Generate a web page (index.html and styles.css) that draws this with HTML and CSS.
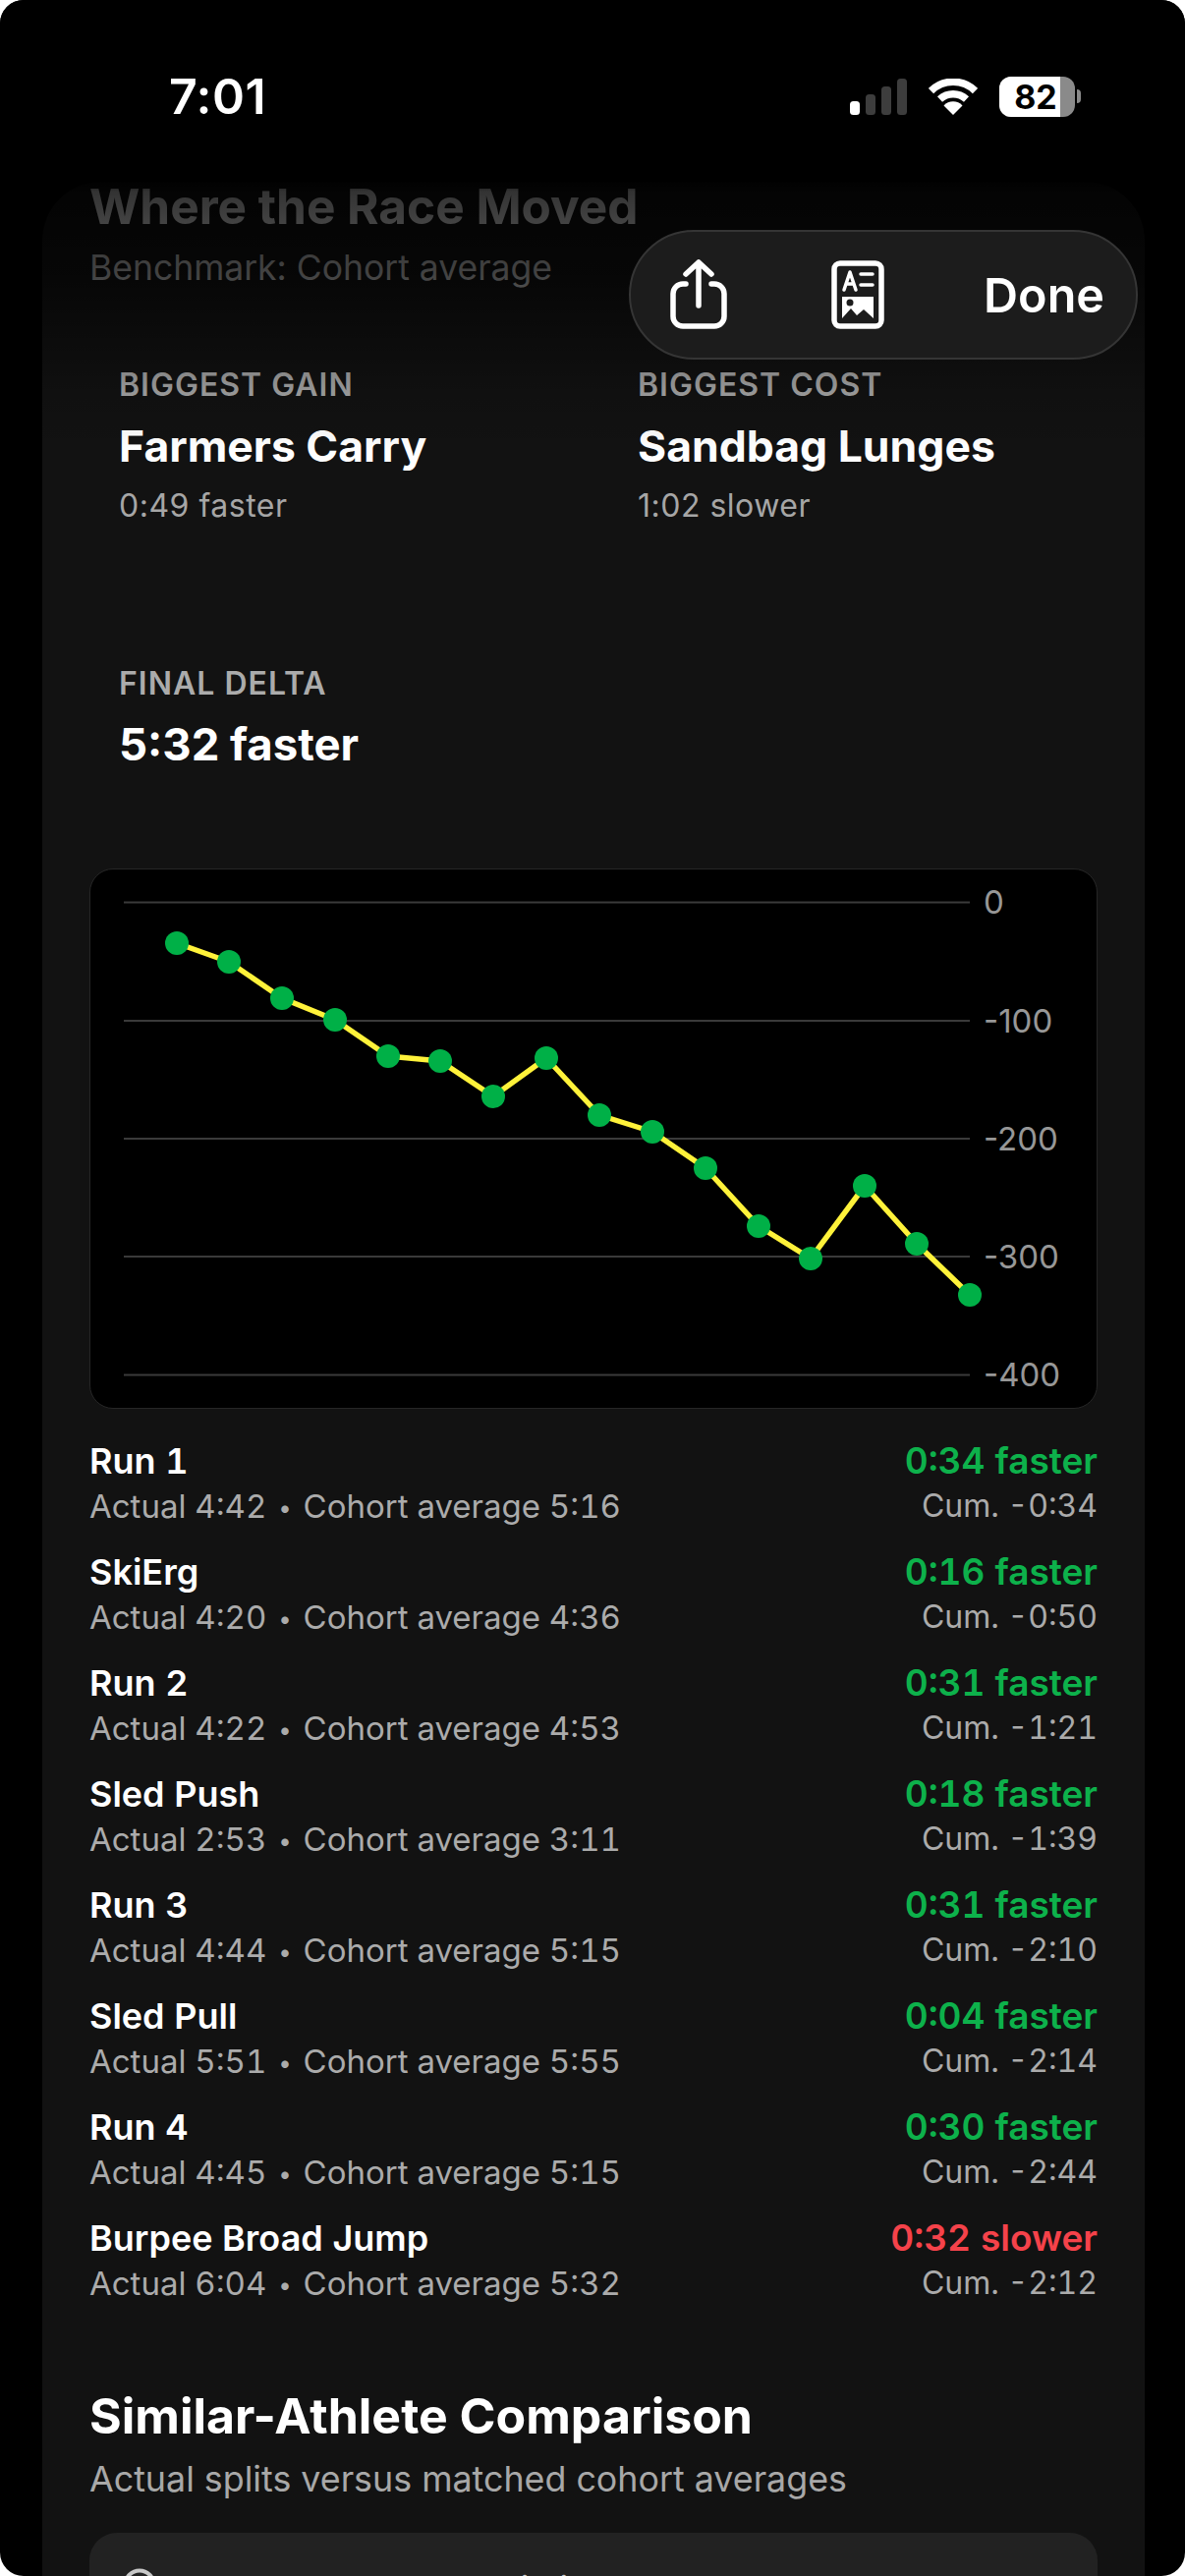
FILE: index.html
```html
<!DOCTYPE html>
<html lang="en">
<head>
    <meta charset="UTF-8">
    <meta name="viewport" content="width=device-width, initial-scale=1.0">
    <title>Where the Race Moved</title>
    <link rel="stylesheet" href="styles.css">
</head>
<body>
    <div class="screen">
        <div class="card">
            <h2 class="section-title">Where the Race Moved</h2>
            <p class="section-sub">Benchmark: Cohort average</p>

            <div class="stats">
                <div class="stat">
                    <div class="stat-label">BIGGEST GAIN</div>
                    <div class="stat-value">Farmers Carry</div>
                    <div class="stat-note">0:49 faster</div>
                </div>
                <div class="stat">
                    <div class="stat-label">BIGGEST COST</div>
                    <div class="stat-value">Sandbag Lunges</div>
                    <div class="stat-note">1:02 slower</div>
                </div>
                <div class="stat">
                    <div class="stat-label">FINAL DELTA</div>
                    <div class="stat-value stat-value-big">5:32 faster</div>
                </div>
            </div>

            <div class="chart">
                <svg width="1023" height="550" viewBox="91 884 1023 550">
                    <g class="grid">
                        <line x1="126" x2="987" y1="918.5" y2="918.5"/>
                        <line x1="126" x2="987" y1="1039" y2="1039"/>
                        <line x1="126" x2="987" y1="1159" y2="1159"/>
                        <line x1="126" x2="987" y1="1279" y2="1279"/>
                        <line x1="126" x2="987" y1="1399.5" y2="1399.5"/>
                    </g>
                    <g class="axis">
                        <text x="1001" y="930">0</text>
                        <text x="1001" y="1051">-100</text>
                        <text x="1001" y="1171">-200</text>
                        <text x="1001" y="1291">-300</text>
                        <text x="1001" y="1411">-400</text>
                    </g>
                    <polyline class="trend" points="180,960 233,979 287,1016 341,1038 395,1075 448,1080 502,1116 556,1077 610,1135 664,1152 718,1189 772,1248 825,1281 880,1207 933,1266 987,1318"/>
                    <g class="dots">
                        <circle cx="180" cy="960" r="12"/>
                        <circle cx="233" cy="979" r="12"/>
                        <circle cx="287" cy="1016" r="12"/>
                        <circle cx="341" cy="1038" r="12"/>
                        <circle cx="395" cy="1075" r="12"/>
                        <circle cx="448" cy="1080" r="12"/>
                        <circle cx="502" cy="1116" r="12"/>
                        <circle cx="556" cy="1077" r="12"/>
                        <circle cx="610" cy="1135" r="12"/>
                        <circle cx="664" cy="1152" r="12"/>
                        <circle cx="718" cy="1189" r="12"/>
                        <circle cx="772" cy="1248" r="12"/>
                        <circle cx="825" cy="1281" r="12"/>
                        <circle cx="880" cy="1207" r="12"/>
                        <circle cx="933" cy="1266" r="12"/>
                        <circle cx="987" cy="1318" r="12"/>
                    </g>
                </svg>
            </div>

            <div class="splits">
                <div class="split">
                    <div><div class="split-name">Run 1</div><div class="split-meta">Actual 4:42 <span class="dot">•</span> Cohort average 5:16</div></div>
                    <div class="split-right"><div class="delta faster">0:34 faster</div><div class="split-meta">Cum. -0:34</div></div>
                </div>
                <div class="split">
                    <div><div class="split-name">SkiErg</div><div class="split-meta">Actual 4:20 <span class="dot">•</span> Cohort average 4:36</div></div>
                    <div class="split-right"><div class="delta faster">0:16 faster</div><div class="split-meta">Cum. -0:50</div></div>
                </div>
                <div class="split">
                    <div><div class="split-name">Run 2</div><div class="split-meta">Actual 4:22 <span class="dot">•</span> Cohort average 4:53</div></div>
                    <div class="split-right"><div class="delta faster">0:31 faster</div><div class="split-meta">Cum. -1:21</div></div>
                </div>
                <div class="split">
                    <div><div class="split-name">Sled Push</div><div class="split-meta">Actual 2:53 <span class="dot">•</span> Cohort average 3:11</div></div>
                    <div class="split-right"><div class="delta faster">0:18 faster</div><div class="split-meta">Cum. -1:39</div></div>
                </div>
                <div class="split">
                    <div><div class="split-name">Run 3</div><div class="split-meta">Actual 4:44 <span class="dot">•</span> Cohort average 5:15</div></div>
                    <div class="split-right"><div class="delta faster">0:31 faster</div><div class="split-meta">Cum. -2:10</div></div>
                </div>
                <div class="split">
                    <div><div class="split-name">Sled Pull</div><div class="split-meta">Actual 5:51 <span class="dot">•</span> Cohort average 5:55</div></div>
                    <div class="split-right"><div class="delta faster">0:04 faster</div><div class="split-meta">Cum. -2:14</div></div>
                </div>
                <div class="split">
                    <div><div class="split-name">Run 4</div><div class="split-meta">Actual 4:45 <span class="dot">•</span> Cohort average 5:15</div></div>
                    <div class="split-right"><div class="delta faster">0:30 faster</div><div class="split-meta">Cum. -2:44</div></div>
                </div>
                <div class="split">
                    <div><div class="split-name">Burpee Broad Jump</div><div class="split-meta">Actual 6:04 <span class="dot">•</span> Cohort average 5:32</div></div>
                    <div class="split-right"><div class="delta slower">0:32 slower</div><div class="split-meta">Cum. -2:12</div></div>
                </div>
            </div>

            <h2 class="compare-title">Similar-Athlete Comparison</h2>
            <p class="compare-sub">Actual splits versus matched cohort averages</p>

            <div class="note">
                <svg class="note-icon" width="34" height="34" viewBox="0 0 34 34"><circle cx="17" cy="17" r="14.5"/></svg>
                <span>Averages based on similar athletes</span>
            </div>
        </div>

        <!-- status bar and toolbar sit over the scrolled content -->
        <div class="top-fade"></div>

        <div class="status-bar">
            <span class="clock">7:01</span>
            <div class="status-icons">
                <svg width="58" height="37" viewBox="0 0 58 37">
                    <rect x="0" y="23" width="10" height="14" rx="3.5" fill="#fff"/>
                    <rect x="16" y="16" width="10" height="21" rx="3.5" fill="#3d3d3d"/>
                    <rect x="32" y="8" width="10" height="29" rx="3.5" fill="#3d3d3d"/>
                    <rect x="48" y="0" width="10" height="37" rx="3.5" fill="#3d3d3d"/>
                </svg>
                <svg width="50" height="37" viewBox="0 0 50 37">
                    <path d="M2.500 12.500 A32 32 0 0 1 47.500 12.500" class="wifi-arc"/>
                    <path d="M11.500 21 A20 20 0 0 1 38.500 21" class="wifi-arc"/>
                    <path d="M25 37 L15.500 27.500 A13 13 0 0 1 34.500 27.500 Z" fill="#fff"/>
                </svg>
                <div class="battery">
                    <div class="battery-body">
                        <div class="battery-fill"></div>
                        <span class="battery-num">82</span>
                    </div>
                    <div class="battery-cap"></div>
                </div>
            </div>
        </div>

        <div class="toolbar">
            <svg class="tool-icon" width="60" height="74" viewBox="0 0 60 74">
                <path d="M17 26h-3a10 10 0 0 0-10 10v23a10 10 0 0 0 10 10h32a10 10 0 0 0 10-10V36a10 10 0 0 0-10-10h-3"/>
                <path d="M30 48V4M17 16L30 4l13 12"/>
            </svg>
            <svg class="tool-icon doc-icon" width="54" height="70" viewBox="0 0 54 70">
                <rect x="3" y="3" width="48" height="64" rx="6"/>
                <path class="doc-thin" d="M13 30L19 12l6 18M15.500 24h7M30 14h12M30 25h12"/>
                <path class="doc-fill" d="M11 37h32v22l-10-9-7 6-6-7-9 10z"/>
                <circle class="doc-dot" cx="19" cy="43" r="3.500"/>
            </svg>
            <span class="done">Done</span>
        </div>
    </div>
</body>
</html>
```

FILE: styles.css
```css
* {
    box-sizing: border-box;
}

html, body {
    margin: 0;
    width: 1206px;
    height: 2622px;
    background: #fff;
    overflow: hidden;
}

body {
    font-family: Inter, "Noto Sans", sans-serif;
    color: #fff;
}

.screen {
    position: relative;
    width: 1206px;
    height: 2622px;
    padding: 187px 41px 0 43px;
    background: #000;
    border-radius: 24px;
    overflow: hidden;
}

.card {
    height: 2500px;
    padding: 0 48px;
    background: #121212;
    border-radius: 60px 60px 0 0;
}

.section-title {
    margin: -2px 0 0;
    font-size: 49.500px;
    line-height: 50px;
    font-weight: 700;
    color: #fff;
}

.section-sub {
    margin: 18px 0 0;
    font-size: 35.500px;
    line-height: 40px;
    color: #b8b8b8;
}

.stats {
    display: grid;
    grid-template-columns: 528px 1fr;
    grid-auto-rows: 304px;
    margin-top: 81px;
    padding-left: 30px;
}

.stat-label {
    font-size: 32px;
    line-height: 36px;
    font-weight: 600;
    letter-spacing: 1px;
    color: #ababab;
}

.stat-value {
    margin-top: 19px;
    font-size: 44.500px;
    line-height: 50px;
    font-weight: 700;
    color: #fff;
}

.stat-value-big {
    font-size: 45.500px;
}

.stat-note {
    margin-top: 17px;
    font-size: 32px;
    line-height: 38px;
    letter-spacing: 0.5px;
    color: #a6a6a6;
}

.chart {
    height: 550px;
    margin-top: -98px;
    background: #000;
    border: 1px solid #262626;
    border-radius: 24px;
    overflow: hidden;
}

.chart svg {
    display: block;
    margin: -1px;
}

.grid line {
    stroke: #3a3a3a;
    stroke-width: 2;
}

.axis text {
    font-size: 33px;
    fill: #979797;
}

.trend {
    fill: none;
    stroke: #fff23a;
    stroke-width: 5.500;
    stroke-linejoin: round;
}

.dots circle {
    fill: #00b047;
}

.splits {
    display: flex;
    flex-direction: column;
    gap: 21px;
    margin-top: 30px;
    font-variant-numeric: tabular-nums;
}

.split {
    display: flex;
    justify-content: space-between;
    height: 92px;
}

.split-right {
    text-align: right;
}

.split-name {
    font-size: 36px;
    line-height: 46px;
    font-weight: 600;
    color: #fff;
}

.split-meta {
    font-size: 33px;
    line-height: 46px;
    color: #ababab;
}

.split-right .split-meta {
    font-size: 32px;
}

.dot {
    padding: 0 3px;
    font-size: 24px;
    vertical-align: 2px;
}

.delta {
    font-size: 37px;
    line-height: 46px;
    font-weight: 600;
}

.faster {
    color: #0db14b;
}

.slower {
    color: #f5424a;
}

.compare-title {
    margin: 84px 0 0;
    font-size: 50px;
    line-height: 56px;
    font-weight: 700;
}

.compare-sub {
    margin: 14px 0 0;
    font-size: 35.800px;
    line-height: 44px;
    color: #a8a8a8;
}

.note {
    display: flex;
    align-items: flex-start;
    gap: 20px;
    height: 200px;
    margin-top: 33px;
    padding: 36px 34px;
    background: #222;
    border-radius: 28px;
    font-size: 35.500px;
    line-height: 44px;
    color: #c8c8c8;
}

.note-icon circle {
    fill: none;
    stroke: #c8c8c8;
    stroke-width: 4;
}

.top-fade {
    position: absolute;
    top: 0;
    left: 0;
    right: 0;
    height: 470px;
    background: linear-gradient(to bottom, #000 0, #000 180px, rgba(0, 0, 0, 0.8) 195px, rgba(0, 0, 0, 0.64) 280px, rgba(0, 0, 0, 0.12) 400px, rgba(0, 0, 0, 0) 460px);
    pointer-events: none;
}

.status-bar {
    position: absolute;
    top: 70px;
    left: 172px;
    right: 106px;
    display: flex;
    justify-content: space-between;
    align-items: center;
    height: 56px;
}

.clock {
    font-size: 50px;
    font-weight: 600;
    letter-spacing: 0.5px;
}

.status-icons {
    display: flex;
    align-items: center;
    gap: 22px;
}

.wifi-arc {
    fill: none;
    stroke: #fff;
    stroke-width: 7.500;
}

.battery {
    display: flex;
    align-items: center;
    gap: 2px;
}

.battery-body {
    position: relative;
    display: flex;
    align-items: center;
    justify-content: center;
    width: 77px;
    height: 41px;
    background: #8a8a8a;
    border-radius: 12px;
    overflow: hidden;
}

.battery-fill {
    position: absolute;
    top: 0;
    bottom: 0;
    left: 0;
    width: 62px;
    background: #fff;
}

.battery-num {
    position: relative;
    font-size: 34px;
    font-weight: 700;
    color: #000;
    margin-right: 3px;
}

.battery-cap {
    width: 4px;
    height: 14px;
    background: #8a8a8a;
    border-radius: 0 4px 4px 0;
}

.toolbar {
    position: absolute;
    top: 234px;
    left: 640px;
    display: flex;
    align-items: center;
    width: 518px;
    height: 132px;
    padding: 0 32px 0 39px;
    background: #1c1c1c;
    border: 2px solid #353535;
    border-radius: 66px;
}

.tool-icon {
    fill: none;
    stroke: #fff;
    stroke-width: 5.500;
    stroke-linecap: round;
    stroke-linejoin: round;
}

.doc-icon {
    margin-left: 105px;
}

.doc-thin {
    stroke-width: 3.500;
}

.doc-fill {
    fill: #fff;
    stroke: none;
}

.doc-dot {
    fill: #1c1c1c;
    stroke: none;
}

.done {
    margin-left: auto;
    font-size: 48.500px;
    font-weight: 600;
}
```
